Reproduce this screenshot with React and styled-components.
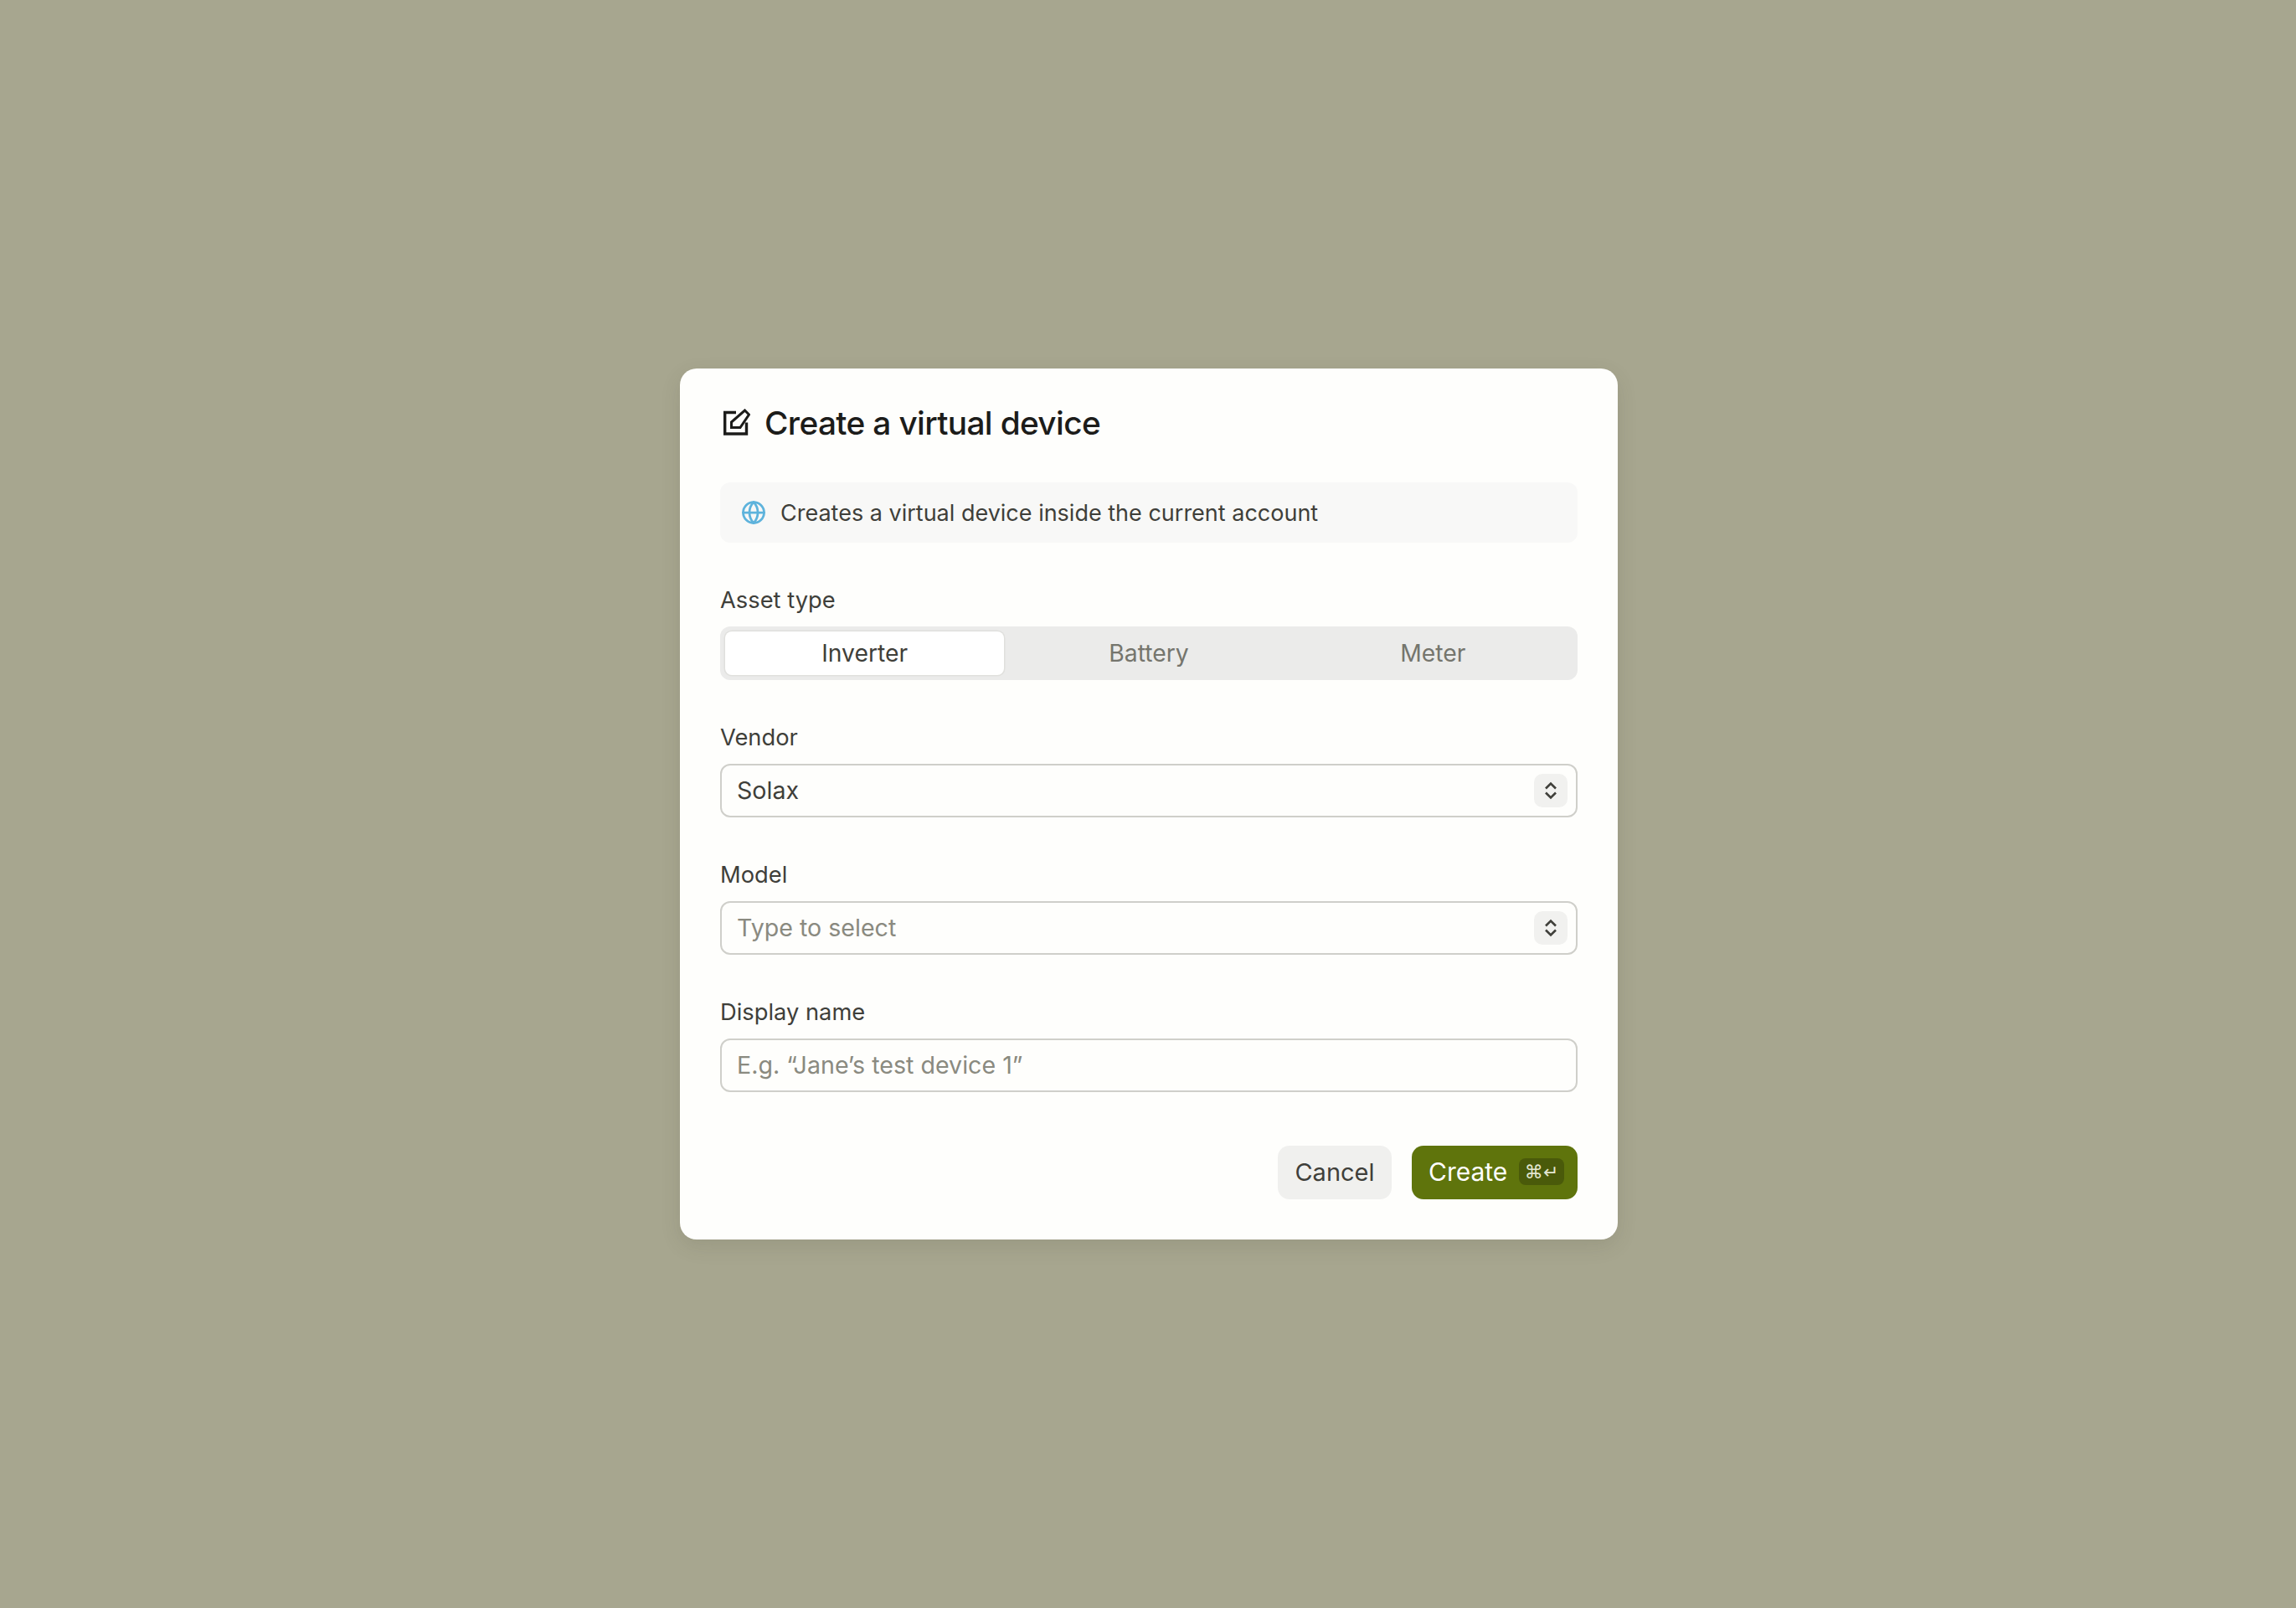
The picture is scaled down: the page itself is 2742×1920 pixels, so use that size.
import styled, { createGlobalStyle } from "styled-components";
import { Globe } from "lucide-react";

const GlobalStyle = createGlobalStyle`
  html, body {
    margin: 0;
    padding: 0;
    background: #a7a68f;
  }
  * {
    box-sizing: border-box;
  }
`;

const EditIcon = () => (
  <TitleIconSvg width="32" height="32" viewBox="0 0 32 32" fill="none" stroke="currentColor" strokeWidth="3.4">
    <path d="M15 4.5H1.7V30H27.5V16.5" />
    <path d="M9.5 22.5V16L25.5 2L30.5 7L20 22.5Z" strokeWidth="3" />
  </TitleIconSvg>
);

const Stepper = () => (
  <StepperBox>
    <svg width="16" height="24" viewBox="0 0 16 24" fill="none" stroke="#3f3f3a" strokeWidth="2.6">
      <path d="M2 9.5L8 3.5L14 9.5" />
      <path d="M2 14.5L8 20.5L14 14.5" />
    </svg>
  </StepperBox>
);

const App = () => {
  return (
    <>
      <GlobalStyle />
      <Page>
        <Dialog>
          <Title>
            <EditIcon />
            Create a virtual device
          </Title>
          <Info>
            <Globe size={30} color="#5eb3dc" strokeWidth={2.2} />
            Creates a virtual device inside the current account
          </Info>
          <Field>
            <Label>Asset type</Label>
            <Tabs>
              <Tab $active>Inverter</Tab>
              <Tab>Battery</Tab>
              <Tab>Meter</Tab>
            </Tabs>
          </Field>
          <Field>
            <Label>Vendor</Label>
            <InputWrap>
              <Input defaultValue="Solax" />
              <Stepper />
            </InputWrap>
          </Field>
          <Field>
            <Label>Model</Label>
            <InputWrap>
              <Input placeholder="Type to select" />
              <Stepper />
            </InputWrap>
          </Field>
          <Field>
            <Label>Display name</Label>
            <InputWrap>
              <Input placeholder="E.g. “Jane’s test device 1”" />
            </InputWrap>
          </Field>
          <Footer>
            <CancelButton>Cancel</CancelButton>
            <CreateButton>
              Create
              <Shortcut>⌘↵</Shortcut>
            </CreateButton>
          </Footer>
        </Dialog>
      </Page>
    </>
  );
};

export default App;

const Page = styled.div`
  width: 100%;
  height: 1920px;
  padding-left: 2px;
  display: flex;
  align-items: center;
  justify-content: center;
  background: #a7a68f;
  font-family: Inter, "Liberation Sans", sans-serif;
`;
const Dialog = styled.div`
  width: 1120px;
  height: 1040px;
  padding: 48px;
  display: flex;
  flex-direction: column;
  gap: 48px;
  background: #fefefc;
  border-radius: 20px;
  box-shadow: 0 8px 24px rgba(60, 60, 40, 0.12);
`;
const Title = styled.h1`
  margin: 0;
  height: 40px;
  display: flex;
  align-items: flex-start;
  gap: 17px;
  font-size: 38.8px;
  line-height: 34px;
  font-weight: 500;
  letter-spacing: -0.65px;
  color: #1c1c1a;
`;
const TitleIconSvg = styled.svg`
  margin-left: 4px;
  color: #1c1c1a;
  flex-shrink: 0;
`;
const Info = styled.div`
  height: 72px;
  padding: 0 25px;
  display: flex;
  align-items: center;
  gap: 17px;
  background: #f8f8f7;
  border-radius: 12px;
  font-size: 27px;
  color: #3f3f3a;
`;
const Field = styled.div`
  display: flex;
  flex-direction: column;
  gap: 16px;
`;
const Label = styled.div`
  height: 36px;
  line-height: 41px;
  font-size: 27.3px;
  color: #3f3f3a;
`;
const Tabs = styled.div`
  height: 64px;
  padding: 6px;
  display: flex;
  gap: 6px;
  background: #ebebea;
  border-radius: 12px;
`;
const Tab = styled.div`
  flex: 1;
  display: flex;
  align-items: center;
  justify-content: center;
  font-size: 28.3px;
  border-radius: 8px;
  color: ${(p) => (p.$active ? "#3f3f3a" : "#75756d")};
  background: ${(p) => (p.$active ? "#fff" : "transparent")};
  box-shadow: ${(p) => (p.$active ? "0 0 0 1.5px #e0e0dd" : "none")};
`;
const InputWrap = styled.div`
  height: 64px;
  padding: 0 10px 0 18px;
  display: flex;
  align-items: center;
  border: 2px solid #cfcfca;
  border-radius: 12px;
  background: #fefefc;
`;
const Input = styled.input`
  flex: 1;
  min-width: 0;
  padding: 0 0 2px;
  border: none;
  outline: none;
  background: transparent;
  font-family: inherit;
  font-size: 28.6px;
  color: #3f3f3a;
  &::placeholder {
    color: #8a8a80;
    opacity: 1;
  }
`;
const StepperBox = styled.div`
  width: 40px;
  height: 40px;
  display: flex;
  align-items: center;
  justify-content: center;
  background: #f1f1ef;
  border-radius: 10px;
`;
const Footer = styled.div`
  margin-top: 16px;
  display: flex;
  justify-content: flex-end;
  gap: 24px;
`;
const CancelButton = styled.button`
  width: 136px;
  height: 64px;
  padding: 0 0 2px;
  border: none;
  border-radius: 14px;
  background: #f0f0ee;
  font-family: inherit;
  font-size: 29px;
  color: #3f3f3a;
`;
const CreateButton = styled.button`
  width: 198px;
  height: 64px;
  padding: 0 16px 2px 20px;
  display: flex;
  align-items: center;
  justify-content: space-between;
  border: none;
  border-radius: 14px;
  background: #5f740c;
  font-family: inherit;
  font-size: 30px;
  color: #fff;
`;
const Shortcut = styled.span`
  width: 54px;
  height: 32px;
  display: flex;
  align-items: center;
  justify-content: center;
  background: #4a5a0a;
  border-radius: 8px;
  font-family: "DejaVu Sans", sans-serif;
  font-size: 22px;
  color: #e3e6d0;
`;
